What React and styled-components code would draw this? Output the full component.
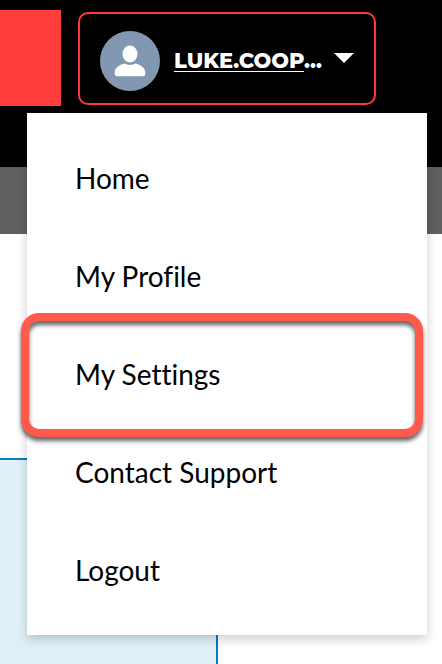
import React from "react";
import styled, { createGlobalStyle, css } from "styled-components";

const GlobalStyle = createGlobalStyle`
  * { box-sizing: border-box; }
  html, body, #root { height: 100%; }
  body {
    margin: 0;
    background: #fff;
    color: #0b0b0b;
    font-family: Lato, "Liberation Sans", sans-serif;
  }
`;

const Page = styled.div`
  min-height: 100%;
  display: flex;
  flex-direction: column;
  overflow: hidden;
`;

const Header = styled.header`
  display: flex;
  align-items: flex-start;
  gap: 17px;
  min-height: 167px;
  padding: 10px 66px 0 0;
  background: #000;
`;

const BrandBlock = styled.div`
  flex: 1;
  height: 96px;
  background: #ff3d3d;
`;

const Account = styled.div`
  position: relative;
  flex: none;
  margin-top: 2px;
`;

const AccountButton = styled.button`
  display: flex;
  align-items: center;
  width: 298px;
  height: 93px;
  padding: 4px 20px 0;
  border: 2px solid #ff3838;
  border-radius: 10px;
  background: #000;
  color: #fff;
  font: 800 21px/28px Montserrat, Lato, sans-serif;
  cursor: pointer;
`;

const Avatar = styled.svg`
  flex: none;
  width: 60px;
  height: 60px;
  margin-right: 14px;
`;

const UserName = styled.span`
  flex: 1;
  text-align: left;
  white-space: nowrap;
`;

const Underlined = styled.span`
  text-decoration: underline;
  text-decoration-thickness: 1px;
  text-underline-offset: 3px;
  text-decoration-skip-ink: none;
`;

const Caret = styled.svg`
  flex: none;
  width: 20px;
  height: 10px;
  margin-bottom: 6px;
`;

const Menu = styled.nav`
  position: absolute;
  z-index: 1;
  top: 101px;
  right: -51px;
  width: 400px;
  padding: 16px 0;
  background: #fff;
  box-shadow: 0 4px 10px rgba(0, 0, 0, 0.2);
`;

const MenuLink = styled.a`
  position: relative;
  display: flex;
  align-items: center;
  height: 98px;
  padding: 0 48px;
  color: #000;
  font-size: 28px;
  line-height: 36px;
  font-variant-ligatures: none;
  text-decoration: none;

  ${({ $marked }) =>
    $marked &&
    css`
      &::after {
        content: "";
        position: absolute;
        inset: -12px 4px -14px -6px;
        border: 8px solid #ff5a4b;
        border-radius: 18px;
        filter: drop-shadow(0 4px 2px rgba(0, 0, 0, 0.6));
        pointer-events: none;
      }
    `}
`;

const SubBar = styled.div`
  height: 67px;
  background: #606060;
`;

const Content = styled.main`
  flex: 1;
  display: flex;
  padding-top: 224px;
`;

const InfoPanel = styled.section`
  width: 218px;
  border: solid #087dbd;
  border-width: 2px 2px 0 0;
  background: #e1f0f7;
`;

const links = ["Home", "My Profile", "My Settings", "Contact Support", "Logout"];

export default function App() {
  return (
    <>
      <GlobalStyle />
      <Page>
        <Header>
          <BrandBlock />
          <Account>
            <AccountButton type="button" aria-haspopup="true" aria-expanded="true">
              <Avatar viewBox="0 0 60 60" aria-hidden="true">
                <circle cx="30" cy="30" r="30" fill="#8198b0" />
                <ellipse cx="30" cy="23" rx="7.5" ry="8.4" fill="#fff" />
                <path
                  d="M24.5 32.5Q30 35.3 35.5 32.5C40.5 33.7 45.3 37 45.3 41.5V43Q45.3 45.3 43 45.3H17Q14.7 45.3 14.7 43V41.5C14.7 37 19.5 33.7 24.5 32.5Z"
                  fill="#fff"
                />
              </Avatar>
              <UserName>
                <Underlined>LUKE.COOP</Underlined>...
              </UserName>
              <Caret viewBox="0 0 20 10" aria-hidden="true">
                <path d="M0 0H20L10 10Z" fill="#fff" />
              </Caret>
            </AccountButton>
            <Menu aria-label="Account">
              {links.map((label) => (
                <MenuLink key={label} href="#" $marked={label === "My Settings"}>
                  {label}
                </MenuLink>
              ))}
            </Menu>
          </Account>
        </Header>
        <SubBar />
        <Content>
          <InfoPanel />
        </Content>
      </Page>
    </>
  );
}
